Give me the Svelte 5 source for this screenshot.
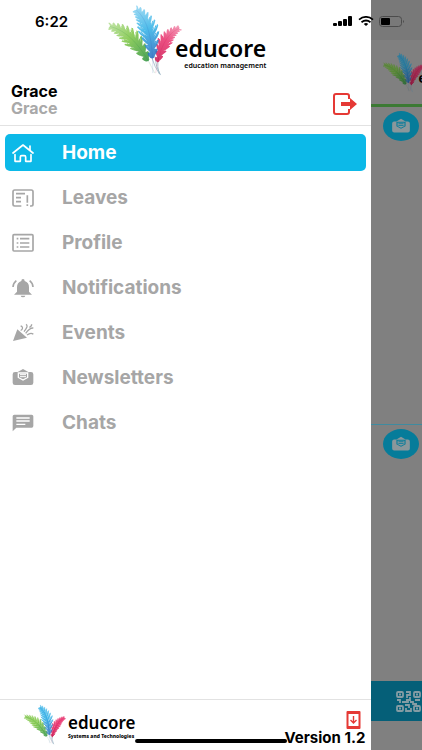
<script lang="ts">
	type Point = [number, number];

	interface Feather {
		id: string;
		tip: Point;
		bend: Point;
		base: Point;
		width: number;
		light: string;
		dark: string;
	}

	let active = $state('home');

	const items = [
		{ id: 'home', label: 'Home' },
		{ id: 'leaves', label: 'Leaves' },
		{ id: 'profile', label: 'Profile' },
		{ id: 'notifications', label: 'Notifications' },
		{ id: 'events', label: 'Events' },
		{ id: 'newsletters', label: 'Newsletters' },
		{ id: 'chats', label: 'Chats' }
	];

	const feathers: Feather[] = [
		{ id: 'green', tip: [4, 22], bend: [30, 28], base: [50, 70], width: 9, light: '#7cc543', dark: '#12803a' },
		{ id: 'pink', tip: [75, 24], bend: [56, 32], base: [51, 70], width: 7, light: '#e8306c', dark: '#c40f4a' },
		{ id: 'blue', tip: [31, 5], bend: [49, 20], base: [48, 70], width: 10, light: '#2fb0e6', dark: '#2050b0' }
	];

	function pointAt(f: Feather, t: number): Point {
		const u = 1 - t;
		return [
			u * u * f.tip[0] + 2 * u * t * f.bend[0] + t * t * f.base[0],
			u * u * f.tip[1] + 2 * u * t * f.bend[1] + t * t * f.base[1]
		];
	}

	// Barbs run from the spine outwards and back towards the tip, in uneven tufts
	function barbs(f: Feather): string {
		let d = '';
		for (let i = 0; i < 76; i++) {
			const t = 0.01 + i * 0.011;
			const [x, y] = pointAt(f, t);
			const [nx, ny] = pointAt(f, t + 0.01);
			const len = Math.hypot(nx - x, ny - y);
			const dx = (x - nx) / len;
			const dy = (y - ny) / len;
			const shape = Math.min(1, 0.3 + t * 1.3) * Math.min(1, (1 - t) * 2.4);
			for (const side of [-1, 1]) {
				const ragged = 0.72 + 0.34 * Math.sin(i * 0.8 + side * 1.3);
				const w = f.width * shape * ragged;
				const ex = x + dx * w * 0.8 - dy * w * side;
				const ey = y + dy * w * 0.8 + dx * w * side;
				const cx = x - dy * w * 0.6 * side;
				const cy = y + dx * w * 0.6 * side;
				d += `M${x.toFixed(1)} ${y.toFixed(1)}Q${cx.toFixed(1)} ${cy.toFixed(1)} ${ex.toFixed(1)} ${ey.toFixed(1)}`;
			}
		}
		return d;
	}

	function spine(f: Feather): string {
		return `M${f.tip.join(' ')}Q${f.bend.join(' ')} ${f.base.join(' ')}`;
	}
</script>

{#snippet mark()}
	<svg class="mark" viewBox="0 0 78 74" fill="none" aria-hidden="true">
		<defs>
			{#each feathers as f}
				<linearGradient id="feather-{f.id}" gradientUnits="userSpaceOnUse" x1={f.tip[0]} y1={f.tip[1]} x2="50" y2="66">
					<stop offset="0" stop-color={f.light} stop-opacity="0.6" />
					<stop offset="0.35" stop-color={f.light} />
					<stop offset="1" stop-color={f.dark} />
				</linearGradient>
			{/each}
		</defs>
		<path d="M47 54Q50 64 55 71M54 54Q52 64 55 71M50 52Q51 64 56 72" stroke="#9ab4c4" stroke-width="0.8" />
		{#each feathers as f}
			<path d={barbs(f)} stroke="url(#feather-{f.id})" stroke-width="1.1" stroke-linecap="round" stroke-opacity="0.85" />
			<path d={spine(f)} stroke={f.dark} stroke-width="1" stroke-opacity="0.15" />
		{/each}
	</svg>
{/snippet}

{#snippet envelope()}
	<path d="M9 12h8l16-9 16 9h8q7 0 7 7v25q0 7-7 7H9q-7 0-7-7V19q0-7 7-7z" fill="currentColor" />
	<path class="paper" d="M17 13h32v16L33 38 17 29z" />
	<path d="M21 17h24v11l-12 6-12-6z" fill="currentColor" />
	<path class="rule" d="M24 20h18M24 26h18" />
{/snippet}

{#snippet icon(id: string)}
	<svg class="icon" viewBox="0 0 66 60" fill="none" stroke-width="5" aria-hidden="true">
		{#if id === 'home'}
			<g stroke="currentColor" stroke-linecap="round" stroke-linejoin="round">
				<path d="M3 30 33 6l30 24" />
				<path d="M9 35v20h16V42q0-4 4-4h8q4 0 4 4v13h16V35" />
				<path d="M54 9v12" />
			</g>
		{:else if id === 'leaves'}
			<g stroke="currentColor">
				<path d="M28 54H8q-5 0-5-5V11q0-5 5-5h50q5 0 5 5v38q0 5-5 5h-4" />
				<path d="M12 17h27M12 29h15M12 41h15M46 22v22M46 49v5" />
			</g>
		{:else if id === 'profile'}
			<g stroke="currentColor">
				<rect x="3" y="5" width="60" height="49" rx="3" />
				<path d="M14 17h5M14 30h5M14 42h5M24 17h28M24 30h28M24 42h28" />
			</g>
		{:else if id === 'notifications'}
			<path d="M33 3q-5 0-5 6-13 4-13 19v13l-9 9h54l-9-9V28q0-15-13-19 0-6-5-6zM26 53h14q-1 5-7 5t-7-5z" fill="currentColor" />
			<path d="M3 27Q4 15 13 8M63 27Q62 15 53 8" stroke="currentColor" />
		{:else if id === 'events'}
			<path d="M3 54 16 19l29 25z" fill="currentColor" />
			<g stroke="currentColor" stroke-width="4">
				<path d="M26 9q7 2 5 8-2 5-5 4M42 4q4 2 3 7-2 6-9 15" />
				<path d="M41 31Q53 14 64 15M59 4q0 7-7 9M45 36q12-9 19-2" />
			</g>
		{:else if id === 'newsletters'}
			{@render envelope()}
		{:else}
			<path d="M7 5h52q5 0 5 5v29q0 5-5 5H13L2 55V10q0-5 5-5z" fill="currentColor" />
			<path d="M13 15h40M13 24h40M13 34h27" stroke="#fff" stroke-width="4" />
		{/if}
	</svg>
{/snippet}

{#snippet post()}
	<article class="post">
		<span class="badge">
			<svg viewBox="0 0 66 56" fill="none" aria-hidden="true">{@render envelope()}</svg>
		</span>
	</article>
{/snippet}

<div class="screen">
	<aside class="drawer">
		<header>
			<div class="brand">
				{@render mark()}
				<div class="wordmark">
					<strong>educore</strong>
					<small>education management</small>
				</div>
			</div>
			<div class="user">
				<div class="names">
					<span>Grace</span>
					<span class="muted">Grace</span>
				</div>
				<button class="logout" aria-label="Log out">
					<svg viewBox="0 0 24 22" fill="none" aria-hidden="true">
						<path d="M16 6V3q0-2-2-2H3Q1 1 1 3v16q0 2 2 2h11q2 0 2-2v-3" stroke="currentColor" stroke-width="2" />
						<path d="M8 9h9V5l7 6-7 6v-4H8z" fill="currentColor" />
					</svg>
				</button>
			</div>
		</header>

		<nav>
			{#each items as item}
				<button class="item" class:active={active === item.id} onclick={() => (active = item.id)}>
					{@render icon(item.id)}
					<span>{item.label}</span>
				</button>
			{/each}
		</nav>

		<footer>
			<div class="brand small">
				{@render mark()}
				<div class="wordmark">
					<strong>educore</strong>
					<small>Systems and Technologies</small>
				</div>
			</div>
			<div class="version">
				<svg viewBox="0 0 14 18" fill="none" aria-hidden="true">
					<path fill-rule="evenodd" d="M1 0h12q1 0 1 1v16q0 1-1 1H1q-1 0-1-1V1q0-1 1-1zM2 3v12h10V3z" fill="currentColor" />
					<path d="M7 5v7M4 9l3 3 3-3" stroke="currentColor" stroke-width="1.4" />
				</svg>
				<span>Version 1.2</span>
			</div>
		</footer>
	</aside>

	<main>
		<div class="topbar">
			<div class="brand mini">
				{@render mark()}
				<div class="wordmark"><strong>educore</strong></div>
			</div>
		</div>
		<div class="feed">
			{@render post()}
			{@render post()}
		</div>
		<div class="tabbar">
			<svg class="qr" viewBox="0 0 26 22" fill="none" stroke="currentColor" stroke-width="1.8" aria-hidden="true">
				<rect x="1" y="1" width="6" height="5" rx="1" />
				<rect x="18" y="1" width="6" height="5" rx="1" />
				<rect x="1" y="15" width="6" height="5" rx="1" />
				<rect x="18" y="15" width="6" height="5" rx="1" />
				<path d="M3 3.5h2M20 3.5h2M3 17.5h2M20 17.5h2M10 1h4v3h-3v3M14 6v3h-4M1 9h3v3M6 11h6V9M14 11h3v2h4M19 9h5M9 14h4v3M10 17v3h5v-3" />
			</svg>
		</div>
	</main>

	<div class="status">
		<time>6:22</time>
		<div class="signals">
			<svg width="20" height="10" viewBox="0 0 20 10" aria-hidden="true">
				<rect y="7" width="4" height="3" rx="1" />
				<rect x="5" y="5" width="4" height="5" rx="1" />
				<rect x="10" y="3" width="4" height="7" rx="1" />
				<rect x="15" width="4" height="10" rx="1" />
			</svg>
			<svg width="16" height="10" viewBox="0 0 16 10" fill="none" stroke="#000" stroke-width="1.8" aria-hidden="true">
				<path d="M1 3.6Q8-1.8 15 3.6M3.5 6.2Q8 2.8 12.5 6.2" />
				<path d="M5.8 7.9Q8 6.3 10.2 7.9L8 10z" fill="#000" stroke="none" />
			</svg>
			<svg width="26" height="11" viewBox="0 0 26 11" fill="none" aria-hidden="true">
				<rect x="0.5" y="0.5" width="22" height="10" rx="3" stroke="#4c4c4c" />
				<rect x="2" y="2" width="9" height="7" rx="1" fill="#000" />
				<path d="M24 4q2 1.5 0 3z" fill="#4c4c4c" />
			</svg>
		</div>
	</div>
	<div class="home-indicator"></div>
</div>

<style>
	:global(body) {
		margin: 0;
		background: #fff;
	}

	.screen {
		position: relative;
		display: grid;
		grid-template-columns: minmax(0, 88fr) minmax(0, 12fr);
		min-height: 100vh;
		overflow: hidden;
		font-family: Inter, 'Liberation Sans', sans-serif;
		font-weight: 700;
		color: #000;
	}

	button {
		border: none;
		padding: 0;
		background: none;
		font: inherit;
		cursor: pointer;
	}

	svg {
		display: block;
		flex: none;
	}

	.drawer {
		display: flex;
		flex-direction: column;
		background: #fff;
	}

	header {
		border-bottom: 1px solid #e2e2e2;
	}

	/* Brand */
	.brand {
		display: flex;
		justify-content: center;
		padding-top: 5px;
	}

	.mark {
		width: 78px;
		height: 72px;
	}

	.wordmark {
		display: flex;
		flex-direction: column;
		align-items: flex-end;
		margin-left: -8px;
		padding-top: 29px;
		font-family: 'Noto Sans', 'Open Sans', sans-serif;
		white-space: nowrap;
	}

	.wordmark strong {
		font-size: 23px;
		font-weight: 600;
		line-height: 28px;
	}

	.wordmark small {
		font-size: 7px;
		font-weight: 600;
		line-height: 8px;
	}

	.small {
		padding-top: 4px;
	}

	.small .mark,
	.mini .mark {
		width: 43px;
		height: 42px;
	}

	.small .wordmark {
		align-items: flex-start;
		margin-left: 2px;
		padding-top: 10px;
	}

	.small strong {
		font-size: 17px;
		line-height: 18px;
	}

	.small small {
		font-size: 5px;
		font-weight: 800;
	}

	/* User row */
	.user {
		display: flex;
		align-items: center;
		justify-content: space-between;
		padding: 6px 14px 8px 11px;
	}

	.names {
		display: flex;
		flex-direction: column;
		font-size: 16px;
		line-height: 17px;
	}

	.muted {
		color: #a9a9a9;
	}

	.logout {
		padding-top: 8px;
		color: #e53935;
	}

	.logout svg {
		width: 24px;
		height: 22px;
	}

	/* Menu */
	nav {
		display: flex;
		flex: 1;
		flex-direction: column;
		gap: 8px;
		padding: 8px 5px;
	}

	.item {
		display: flex;
		align-items: center;
		gap: 28px;
		height: 37px;
		padding: 0 7px;
		border-radius: 5px;
		font-size: 19px;
		color: #a6a6a6;
	}

	.item.active {
		background: #0cb9e8;
		color: #fff;
	}

	.icon {
		width: 22px;
		height: 20px;
	}

	.paper {
		fill: #fff;
	}

	.rule {
		stroke: #fff;
		stroke-width: 3px;
	}

	/* Footer */
	footer {
		display: flex;
		justify-content: space-between;
		height: 50px;
		padding: 0 6px 0 23px;
		border-top: 1px solid #e2e2e2;
	}

	.version {
		display: flex;
		flex-direction: column;
		align-items: flex-end;
		gap: 1px;
		padding-top: 11px;
		font-size: 15px;
		line-height: 16px;
	}

	.version svg {
		width: 15px;
		height: 18px;
		margin-right: 4px;
		color: #e53935;
	}

	/* Dimmed page behind the drawer */
	main {
		display: flex;
		flex-direction: column;
		overflow: hidden;
		background: #808080;
	}

	.topbar {
		padding-top: 40px;
		border-bottom: 3px solid #3c7a34;
		background: linear-gradient(#797979 40px, #808080 40px);
	}

	.mini {
		justify-content: flex-start;
		padding: 12px 0 10px 11px;
		background: #808080;
	}

	.mini .mark {
		filter: brightness(0.7);
	}

	.mini .wordmark {
		margin-left: -7px;
		padding-top: 16px;
	}

	.mini strong {
		font-size: 15px;
		line-height: 18px;
	}

	.feed {
		flex: 1;
	}

	.post {
		height: 313px;
		padding: 4px 0 0 12px;
	}

	.post + .post {
		height: auto;
		border-top: 1px solid #3f8ba0;
	}

	.badge {
		display: flex;
		align-items: center;
		justify-content: center;
		width: 36px;
		height: 30px;
		border-radius: 50%;
		background: #067c9a;
		color: #8a979b;
	}

	.badge svg {
		width: 20px;
		height: 16px;
	}

	.badge .paper {
		fill: #067c9a;
	}

	.badge .rule {
		stroke: #067c9a;
	}

	.tabbar {
		margin-bottom: 29px;
		padding: 10px 0 8px 25px;
		background: #055f78;
		color: #849ca4;
	}

	.qr {
		width: 26px;
		height: 22px;
	}

	/* System chrome floats above both panes */
	.status {
		position: absolute;
		inset: 0 0 auto;
		display: flex;
		align-items: center;
		justify-content: space-between;
		height: 42px;
		padding: 0 17px 0 35px;
		pointer-events: none;
	}

	time {
		font-size: 15px;
		font-weight: 600;
	}

	.signals {
		display: flex;
		align-items: center;
		gap: 5px;
	}

	.home-indicator {
		position: absolute;
		bottom: 7px;
		left: 50%;
		width: 36%;
		height: 4px;
		border-radius: 2px;
		background: #000;
		transform: translateX(-50%);
	}
</style>
